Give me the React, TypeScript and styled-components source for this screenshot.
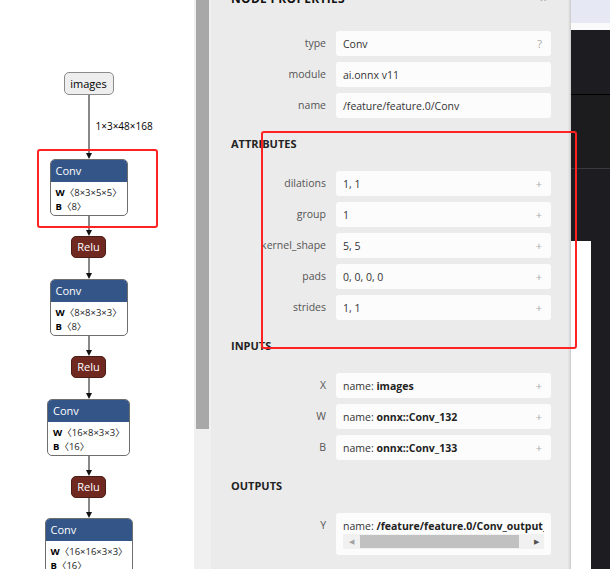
import React from "react";
import styled, { createGlobalStyle } from "styled-components";

const GlobalStyle = createGlobalStyle`
  html, body { margin: 0; padding: 0; }
  body {
    width: 610px;
    height: 569px;
    overflow: hidden;
    background: #ffffff;
    font-family: "Open Sans", "Noto Sans", sans-serif;
  }
  * { box-sizing: border-box; }
`;

const Screen = styled.div`
  position: relative;
  display: flex;
  width: 610px;
  height: 569px;
  overflow: hidden;
`;

/* ---------- graph ---------- */
const GraphArea = styled.div`
  width: 194px;
  flex: none;
  background: #ffffff;
  overflow: hidden;
`;

const GraphColumn = styled.div`
  width: 177px;
  display: flex;
  flex-direction: column;
  align-items: center;
  padding-top: 72px;
`;

const InputNode = styled.div`
  height: 23px;
  width: 50px;
  border: 1px solid #8c8c8c;
  border-radius: 5px;
  background: #eeeeee;
  font-size: 11px;
  line-height: 21px;
  text-align: center;
  color: #000;
`;

const EdgeWrap = styled.div<{ $h: number }>`
  position: relative;
  width: 10px;
  height: ${(p) => p.$h}px;
  flex: none;
`;

const EdgeLabel = styled.span`
  position: absolute;
  left: 12px;
  top: 24px;
  font-size: 10px;
  white-space: nowrap;
  color: #000;
`;

const LayerNode = styled.div<{ $w: number }>`
  width: ${(p) => p.$w}px;
  height: 57px;
  border: 1px solid #6e6e6e;
  border-radius: 5px;
  overflow: hidden;
  background: #ffffff;
  flex: none;
`;

const LayerHeader = styled.div`
  height: 22px;
  background: #335588;
  color: #ffffff;
  font-size: 11px;
  line-height: 22px;
  padding-left: 5px;
`;

const LayerBody = styled.div`
  padding: 4px 5px 1px;
  font-size: 9.5px;
  line-height: 14px;
  color: #222;
  white-space: nowrap;
  font-family: "Open Sans", "Noto Sans CJK SC", sans-serif;
`;

const AttrName = styled.b`
  font-weight: 700;
  color: #000;
`;

const ActNode = styled.div`
  width: 35px;
  height: 22px;
  border: 1px solid #4d1d17;
  border-radius: 5px;
  background: #702921;
  color: #ffffff;
  font-size: 11px;
  line-height: 20px;
  text-align: center;
  flex: none;
`;

function Edge({ h, label }: { h: number; label?: string }) {
  return (
    <EdgeWrap $h={h}>
      <svg width="10" height={h} style={{ display: "block" }}>
        <line x1="5" y1="0" x2="5" y2={h - 4} stroke="#111" strokeWidth="1" />
        <polygon points={`2,${h - 6} 8,${h - 6} 5,${h}`} fill="#111" />
      </svg>
      {label && <EdgeLabel>{label}</EdgeLabel>}
    </EdgeWrap>
  );
}

function Conv({ w, W, B }: { w: number; W: string; B: string }) {
  return (
    <LayerNode $w={w}>
      <LayerHeader>Conv</LayerHeader>
      <LayerBody>
        <div>
          <AttrName>W</AttrName>〈{W}〉
        </div>
        <div>
          <AttrName>B</AttrName>〈{B}〉
        </div>
      </LayerBody>
    </LayerNode>
  );
}

/* ---------- scrollbar between graph and panel ---------- */
const Track = styled.div`
  width: 17px;
  flex: none;
  background: #f0f0f0;
  padding: 0 2px;
`;

const Thumb = styled.div`
  height: 429px;
  background: #a8a8a8;
`;

/* ---------- properties panel ---------- */
const Panel = styled.div`
  width: 360px;
  flex: none;
  background: #ebebeb;
  padding: 0 20px;
  box-shadow: inset -3px 0 3px -2px rgba(0, 0, 0, 0.18);
  font-size: 10.5px;
  color: #333;
`;

const Title = styled.div`
  margin-top: -12px;
  height: 20px;
  display: flex;
  justify-content: space-between;
  align-items: center;
  font-size: 12px;
  font-weight: 700;
  color: #111;
  letter-spacing: 0.3px;
`;

const Close = styled.span`
  font-weight: 400;
  color: #999;
  margin-right: 4px;
`;

const Grid = styled.div<{ $top?: number }>`
  display: grid;
  grid-template-columns: 95px 1fr;
  column-gap: 10px;
  row-gap: 6px;
  margin-top: ${(p) => p.$top ?? 0}px;
`;

const Label = styled.div`
  text-align: right;
  line-height: 25px;
  color: #555;
  white-space: nowrap;
`;

const Value = styled.div`
  min-height: 25px;
  background: #fcfcfc;
  border-radius: 3px;
  padding: 0 7px;
  display: flex;
  align-items: center;
  justify-content: space-between;
  color: #333;
  white-space: nowrap;
  overflow: hidden;
`;

const Hint = styled.span`
  color: #aaa;
  font-size: 11px;
  margin-right: 2px;
`;

const Section = styled.div`
  margin-top: 18px;
  margin-bottom: 19px;
  height: 16px;
  line-height: 16px;
  font-size: 11px;
  font-weight: 700;
  color: #222;
`;

const Strong = styled.b`
  font-weight: 700;
  color: #222;
`;

const OutputValue = styled.div`
  background: #fcfcfc;
  border-radius: 3px;
  padding: 6px 7px;
  overflow: hidden;
`;

const OutputText = styled.div`
  line-height: 14px;
  white-space: nowrap;
  overflow: hidden;
  color: #333;
`;

const HScroll = styled.div`
  margin-top: 1px;
  height: 15px;
  background: #f1f1f1;
  display: flex;
  align-items: center;
  padding: 0 4px;
  gap: 5px;
`;

const Arrow = styled.span<{ $dark?: boolean }>`
  font-size: 7px;
  color: ${(p) => (p.$dark ? "#505050" : "#a3a3a3")};
  width: 8px;
  text-align: center;
`;

const HThumb = styled.div`
  flex: 1;
  height: 13px;
  background: #c1c1c1;
  margin-right: 8px;
`;

/* ---------- background app on the right ---------- */
const Backdrop = styled.div`
  flex: 1;
  display: flex;
  flex-direction: column;
  background: #1d1c21;
`;

const BarLight = styled.div`
  height: 23px;
  background: #e6e8f3;
`;

const BarWhite = styled.div`
  height: 7px;
  background: #fafafa;
`;

const DarkBlock = styled.div<{ $h: number; $bg: string; $line?: string }>`
  height: ${(p) => p.$h}px;
  background: ${(p) => p.$bg};
  border-bottom: ${(p) => (p.$line ? `1px solid ${p.$line}` : "none")};
`;

const SplitRow = styled.div`
  flex: 1;
  display: flex;
`;

const WhiteStripe = styled.div`
  width: 20px;
  background: #ffffff;
`;

/* ---------- annotations ---------- */
const Mark = styled.div<{ $x: number; $y: number; $w: number; $h: number }>`
  position: absolute;
  left: ${(p) => p.$x}px;
  top: ${(p) => p.$y}px;
  width: ${(p) => p.$w}px;
  height: ${(p) => p.$h}px;
  border: 2px solid #ff2222;
  border-radius: 3px;
  pointer-events: none;
`;

export default function App() {
  return (
    <>
      <GlobalStyle />
      <Screen>
        <GraphArea>
          <GraphColumn>
            <InputNode>images</InputNode>
            <Edge h={64} label="1×3×48×168" />
            <Conv w={78} W="8×3×5×5" B="8" />
            <Edge h={20} />
            <ActNode>Relu</ActNode>
            <Edge h={21} />
            <Conv w={78} W="8×8×3×3" B="8" />
            <Edge h={20} />
            <ActNode>Relu</ActNode>
            <Edge h={21} />
            <Conv w={83} W="16×8×3×3" B="16" />
            <Edge h={20} />
            <ActNode>Relu</ActNode>
            <Edge h={20} />
            <Conv w={88} W="16×16×3×3" B="16" />
          </GraphColumn>
        </GraphArea>

        <Track>
          <Thumb />
        </Track>

        <Panel>
          <Title>
            <span>NODE PROPERTIES</span>
            <Close>×</Close>
          </Title>
          <Grid $top={23}>
            <Label>type</Label>
            <Value>
              Conv<Hint>?</Hint>
            </Value>
            <Label>module</Label>
            <Value>ai.onnx v11</Value>
            <Label>name</Label>
            <Value>/feature/feature.0/Conv</Value>
          </Grid>

          <Section>ATTRIBUTES</Section>
          <Grid>
            {[
              ["dilations", "1, 1"],
              ["group", "1"],
              ["kernel_shape", "5, 5"],
              ["pads", "0, 0, 0, 0"],
              ["strides", "1, 1"],
            ].map(([k, v]) => (
              <React.Fragment key={k}>
                <Label>{k}</Label>
                <Value>
                  {v}
                  <Hint>+</Hint>
                </Value>
              </React.Fragment>
            ))}
          </Grid>

          <Section>INPUTS</Section>
          <Grid>
            {[
              ["X", "images"],
              ["W", "onnx::Conv_132"],
              ["B", "onnx::Conv_133"],
            ].map(([k, v]) => (
              <React.Fragment key={k}>
                <Label>{k}</Label>
                <Value>
                  <span>
                    name: <Strong>{v}</Strong>
                  </span>
                  <Hint>+</Hint>
                </Value>
              </React.Fragment>
            ))}
          </Grid>

          <Section>OUTPUTS</Section>
          <Grid>
            <Label>Y</Label>
            <OutputValue>
              <OutputText>
                name: <Strong>/feature/feature.0/Conv_output_0</Strong>
              </OutputText>
              <HScroll>
                <Arrow>◀</Arrow>
                <HThumb />
                <Arrow $dark>▶</Arrow>
              </HScroll>
            </OutputValue>
          </Grid>
        </Panel>

        <Backdrop>
          <BarLight />
          <BarWhite />
          <DarkBlock $h={65} $bg="#1d1c21" $line="#000" />
          <DarkBlock $h={74} $bg="#1c1c1f" $line="#3a3a3e" />
          <DarkBlock $h={72} $bg="#1d1c21" />
          <SplitRow>
            <WhiteStripe />
          </SplitRow>
        </Backdrop>

        <Mark $x={37} $y={149} $w={121} $h={79} />
        <Mark $x={261} $y={131} $w={316} $h={218} />
      </Screen>
    </>
  );
}
